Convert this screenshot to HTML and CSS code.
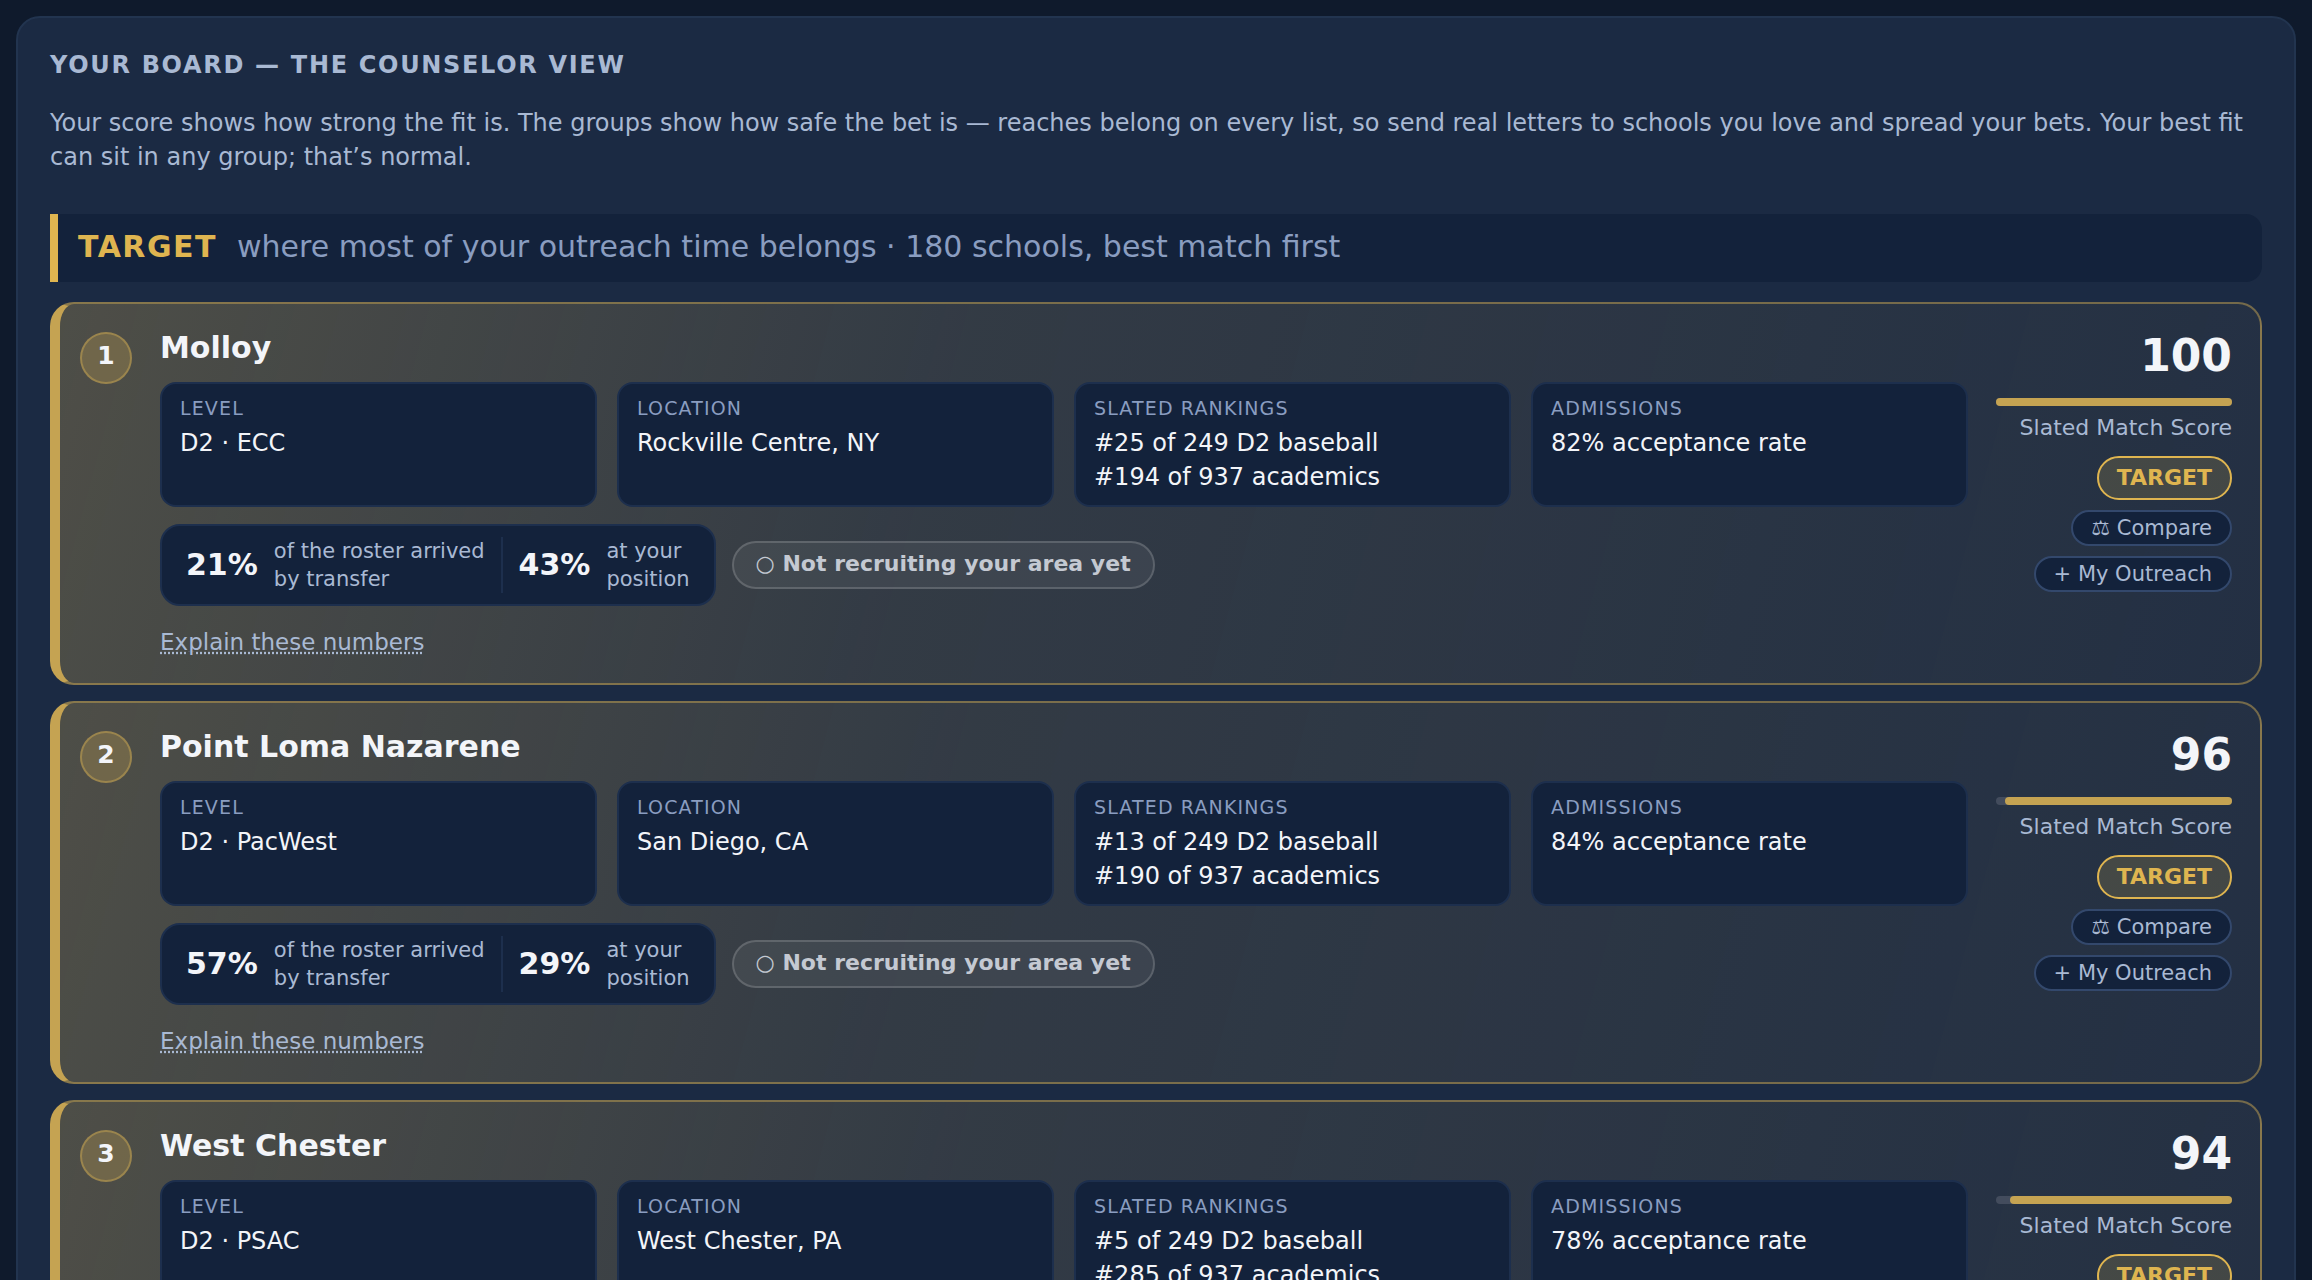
FILE: index.html
```
<!DOCTYPE html>
<html lang="en">
<head>
  <meta charset="utf-8">
  <title>Your Board</title>
  <link rel="stylesheet" href="styles.css">
</head>
<body>
  <main class="panel">
    <h2 class="panel-title">Your board — the counselor view</h2>
    <p class="panel-intro">Your score shows how strong the fit is. The groups show how safe the bet is — reaches belong on every list, so send real letters to schools you love and spread your bets. Your best fit can sit in any group; that’s normal.</p>

    <div class="group-head">
      <strong>TARGET</strong>
      <span>where most of your outreach time belongs · 180 schools, best match first</span>
    </div>

    <article class="card">
      <div class="rank">1</div>
      <div class="card-main">
        <h3 class="school">Molloy</h3>
        <dl class="facts">
          <div class="fact"><dt>Level</dt><dd>D2 · ECC</dd></div>
          <div class="fact"><dt>Location</dt><dd>Rockville Centre, NY</dd></div>
          <div class="fact"><dt>Slated rankings</dt><dd>#25 of 249 D2 baseball</dd><dd>#194 of 937 academics</dd></div>
          <div class="fact"><dt>Admissions</dt><dd>82% acceptance rate</dd></div>
        </dl>
        <div class="signals">
          <div class="roster">
            <div class="stat"><b>21%</b><span>of the roster arrived<br>by transfer</span></div>
            <div class="stat"><b>43%</b><span>at your<br>position</span></div>
          </div>
          <span class="recruiting">○ Not recruiting your area yet</span>
        </div>
        <a class="explain" href="#">Explain these numbers</a>
      </div>
      <div class="score">
        <div class="score-num">100</div>
        <div class="meter"><div class="meter-fill" style="width: 100%"></div></div>
        <div class="score-label">Slated Match Score</div>
        <span class="tier">TARGET</span>
        <button class="action" type="button">⚖ Compare</button>
        <button class="action" type="button">+ My Outreach</button>
      </div>
    </article>

    <article class="card">
      <div class="rank">2</div>
      <div class="card-main">
        <h3 class="school">Point Loma Nazarene</h3>
        <dl class="facts">
          <div class="fact"><dt>Level</dt><dd>D2 · PacWest</dd></div>
          <div class="fact"><dt>Location</dt><dd>San Diego, CA</dd></div>
          <div class="fact"><dt>Slated rankings</dt><dd>#13 of 249 D2 baseball</dd><dd>#190 of 937 academics</dd></div>
          <div class="fact"><dt>Admissions</dt><dd>84% acceptance rate</dd></div>
        </dl>
        <div class="signals">
          <div class="roster">
            <div class="stat"><b>57%</b><span>of the roster arrived<br>by transfer</span></div>
            <div class="stat"><b>29%</b><span>at your<br>position</span></div>
          </div>
          <span class="recruiting">○ Not recruiting your area yet</span>
        </div>
        <a class="explain" href="#">Explain these numbers</a>
      </div>
      <div class="score">
        <div class="score-num">96</div>
        <div class="meter"><div class="meter-fill" style="width: 96%"></div></div>
        <div class="score-label">Slated Match Score</div>
        <span class="tier">TARGET</span>
        <button class="action" type="button">⚖ Compare</button>
        <button class="action" type="button">+ My Outreach</button>
      </div>
    </article>

    <article class="card">
      <div class="rank">3</div>
      <div class="card-main">
        <h3 class="school">West Chester</h3>
        <dl class="facts">
          <div class="fact"><dt>Level</dt><dd>D2 · PSAC</dd></div>
          <div class="fact"><dt>Location</dt><dd>West Chester, PA</dd></div>
          <div class="fact"><dt>Slated rankings</dt><dd>#5 of 249 D2 baseball</dd><dd>#285 of 937 academics</dd></div>
          <div class="fact"><dt>Admissions</dt><dd>78% acceptance rate</dd></div>
        </dl>
      </div>
      <div class="score">
        <div class="score-num">94</div>
        <div class="meter"><div class="meter-fill" style="width: 94%"></div></div>
        <div class="score-label">Slated Match Score</div>
        <span class="tier">TARGET</span>
      </div>
    </article>
  </main>
</body>
</html>
```

FILE: styles.css
```
* {
  box-sizing: border-box;
}

html {
  height: 100%;
  overflow: hidden;
}

body {
  margin: 0;
  padding: 16px;
  height: 100%;
  overflow: hidden;
  background: #0f1a2c;
  color: #f3f5f9;
  font-family: "DejaVu Sans", Verdana, sans-serif;
  font-size: 24px;
  line-height: 34px;
}

h2, h3, p, dl, dd {
  margin: 0;
}

/* Board panel */
.panel {
  padding: 30px 32px;
  background: #1b2a43;
  border: 2px solid #22344f;
  border-radius: 24px;
}

.panel-title {
  font-size: 24px;
  line-height: 34px;
  letter-spacing: 0.07em;
  text-transform: uppercase;
  color: #a9b9d3;
}

.panel-intro {
  margin-top: 24px;
  color: #a9b9d3;
}

.group-head {
  display: flex;
  align-items: center;
  gap: 20px;
  height: 68px;
  margin: 40px 0 20px;
  padding: 0 20px 2px;
  background: #13223b;
  border-left: 8px solid #dfb550;
  border-radius: 0 16px 16px 0;
  font-size: 30px;
  color: #8a9dc0;
}

.group-head strong {
  color: #dfb550;
  letter-spacing: 0.05em;
}

/* School cards */
.card {
  display: flex;
  gap: 28px;
  min-height: 383px;
  margin-bottom: 16px;
  padding: 20px 28px 20px 20px;
  background: linear-gradient(105deg, rgba(197, 163, 82, 0.3), rgba(197, 163, 82, 0.14) 40%, rgba(197, 163, 82, 0.05));
  border: 2px solid rgba(197, 163, 82, 0.5);
  border-left: 10px solid #c5a352;
  border-radius: 24px;
}

.rank {
  flex: none;
  width: 52px;
  height: 52px;
  margin-top: 8px;
  background: rgba(197, 163, 82, 0.3);
  border: 2px solid rgba(197, 163, 82, 0.5);
  border-radius: 50%;
  font-size: 25px;
  font-weight: bold;
  line-height: 44px;
  text-align: center;
}

.card-main {
  flex: 1;
  min-width: 0;
}

.school {
  font-size: 30px;
  line-height: 48px;
}

.facts {
  display: grid;
  grid-template-columns: repeat(4, 1fr);
  gap: 20px;
  margin-top: 10px;
}

.fact {
  min-height: 125px;
  padding: 7px 18px;
  background: #13223b;
  border: 2px solid #1d2f4d;
  border-radius: 16px;
}

.fact dt {
  margin-bottom: 1px;
  font-size: 19px;
  letter-spacing: 0.06em;
  text-transform: uppercase;
  color: #8a9dc0;
}

.signals {
  display: flex;
  align-items: center;
  gap: 16px;
  margin-top: 17px;
}

.roster {
  display: flex;
  padding: 11px 24px;
  background: #13223b;
  border: 2px solid #1d2f4d;
  border-radius: 20px;
}

.stat {
  display: flex;
  align-items: center;
  gap: 16px;
  font-size: 21px;
  line-height: 28px;
  color: #a9b9d3;
}

.stat + .stat {
  margin-left: 16px;
  padding-left: 16px;
  border-left: 2px solid #1d2f4d;
}

.stat b {
  font-size: 30px;
  color: #f3f5f9;
}

.recruiting {
  padding: 4px 22px 6px;
  background: rgba(255, 255, 255, 0.06);
  border: 2px solid rgba(255, 255, 255, 0.16);
  border-radius: 24px;
  font-size: 22px;
  font-weight: bold;
  color: #c4c9d2;
}

.explain {
  display: inline-block;
  margin-top: 19px;
  font-size: 23px;
  color: #a9b9d3;
  text-decoration: underline dotted;
}

/* Score column */
.score {
  display: flex;
  flex: none;
  flex-direction: column;
  align-items: flex-end;
  width: 236px;
}

.score-num {
  margin-top: 8px;
  font-size: 44px;
  font-weight: bold;
  line-height: 48px;
}

.meter {
  width: 100%;
  height: 8px;
  margin-top: 18px;
  background: #434c5d;
  border-radius: 4px;
}

.meter-fill {
  height: 8px;
  margin-left: auto;
  background: #c5a352;
  border-radius: 4px;
}

.score-label {
  margin: 5px 0 11px;
  font-size: 22px;
  color: #a9b9d3;
}

.tier {
  padding: 0 18px;
  background: rgba(197, 163, 82, 0.2);
  border: 2px solid #dfb550;
  border-radius: 22px;
  font-size: 22px;
  font-weight: bold;
  line-height: 40px;
  color: #dfb550;
}

.action {
  height: 36px;
  margin-top: 10px;
  padding: 0 18px;
  background: #13223b;
  border: 2px solid #33486c;
  border-radius: 18px;
  font: inherit;
  font-size: 21px;
  line-height: 30px;
  color: #a9b9d3;
  cursor: pointer;
}
```
